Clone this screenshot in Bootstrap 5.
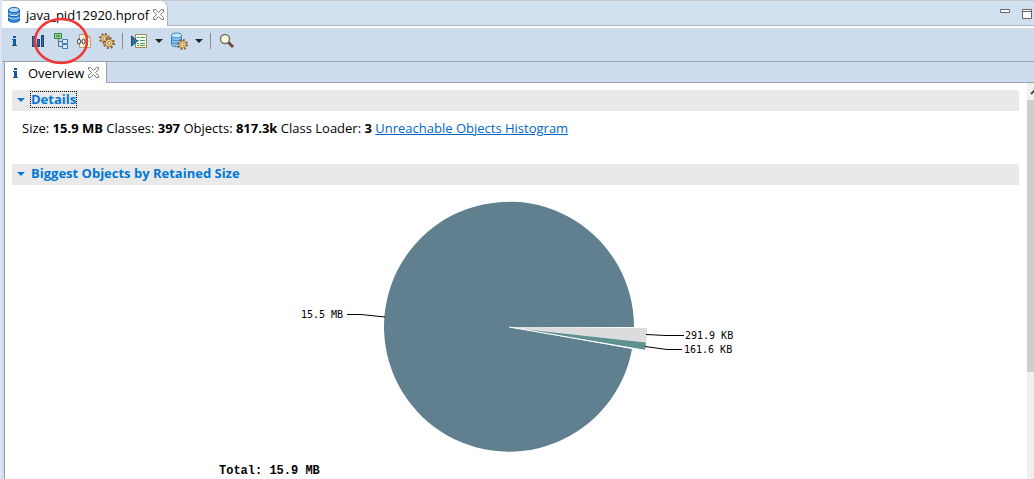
<!DOCTYPE html>
<html lang="en">
<head>
<meta charset="utf-8">
<meta name="viewport" content="width=device-width, initial-scale=1">
<title>java_pid12920.hprof</title>
<link rel="stylesheet" href="https://cdn.jsdelivr.net/npm/bootstrap@5.3.0/dist/css/bootstrap.min.css">
<style>
  body { font: 13px/20px "Open Sans", sans-serif; color: #000; background: #dfe4f3; }
  .editor { margin-left: 2px; border-top: 1px solid #c8c8c8; background: #cddcec; }
  .file-tabs { height: 25px; background: #d0e0ee; border-bottom: 1px solid #a9b4c8; }
  .file-tab { height: 27px; width: 166px; padding-left: 4px; background: #fff; border-right: 1px solid #a9b4c8; border-radius: 0 7px 0 0; }
  .plain { border: 0; padding: 0; background: none; color: inherit; display: flex; align-items: center; }
  .plain svg, .plot { display: block; }
  .toolbar { height: 36px; border-top: 2px solid #fff; border-bottom: 1px solid #9a9fa8; padding: 0 0 8px 5px; gap: 7px; }
  .toolbar .rule { width: 1px; height: 16px; background: #858b94; }
  .toolbar .plain, .file-tab .plain, .view-tab .plain { color: #222; }
  .ring { position: absolute; left: -20px; top: -16px; pointer-events: none; z-index: 2; }
  .view-tabs { height: 21px; border-bottom: 1px solid #9a9fa8; margin-left: 2px; }
  .view-tab { height: 21px; width: 103px; padding-left: 3px; background: #fff; border: 1px solid #9a9fa8; border-width: 0 1px; }
  .page-area { margin-left: 2px; background: #fff; border-left: 1px solid #9a9fa8; }
  .page-body { padding: 7px 8px 0 7px; }
  .section-head { height: 21px; background: #e9e9e9; padding: 0 0 2px 5px; gap: 6px; border-radius: 3px 3px 0 0; color: #0078d7; }
  .section-head h2 { font-size: 13px; line-height: 15px; font-weight: 700; margin: 0; }
  .section-head .focused { outline: 1px dotted #000; }
  .facts { margin: 7px 10px 26px; }
  .facts a { color: #0066cc; }
  .track { width: 7px; background: #f0f0f0; overflow: hidden; }
  .track svg { display: block; }
  .thumb { height: 272px; background: #cdcdcd; }
  .plot { margin: 10px auto 0; }
  .plot text { font: 10px "DejaVu Sans Mono", monospace; }
  .plot .total { font: bold 12px "Liberation Mono", monospace; }
</style>
</head>
<body class="min-vh-100 d-flex flex-column overflow-hidden">
<svg width="0" height="0" class="position-absolute" aria-hidden="true">
  <symbol id="info" viewBox="0 0 16 16"><path d="M6 3h3v2H6zM5 6h4v6h1v1H5v-1h1V7H5z" fill="#155a9c"/></symbol>
  <symbol id="cross" viewBox="0 0 11 11"><path d="M.5.5h2l3 3 3-3h2v2l-3 3 3 3v2h-2l-3-3-3 3h-2v-2l3-3-3-3z" fill="#fff" stroke="#777"/></symbol>
  <symbol id="caret" viewBox="0 0 8 4"><path d="M0 0h8L4 4z" fill="currentColor"/></symbol>
  <symbol id="cog" viewBox="-8 -8 16 16"><circle r="6.500" fill="none" stroke="#8b5a2b" stroke-width="3" stroke-dasharray="2.550 2.550"/><circle r="5" fill="#f2d08b" stroke="#96622c"/><circle r="2" fill="#fff" stroke="#96622c"/></symbol>
</svg>
<main class="editor flex-grow-1 d-flex flex-column">
  <div class="file-tabs d-flex justify-content-between">
    <div class="file-tab d-flex align-items-center flex-shrink-0">
      <svg width="16" height="18" viewBox="0 0 16 18" class="me-1"><g fill="#4c9be0" stroke="#1660b4"><path d="M2.500 4v10c0 3 11 3 11 0V4"/><ellipse cx="8" cy="4" rx="5.500" ry="2.500" fill="#b9def7"/><path d="M2.500 7.500c0 3 11 3 11 0M2.500 11c0 3 11 3 11 0" fill="none" stroke="#e4f4ff"/><path d="M2.500 8.500c0 3 11 3 11 0M2.500 12c0 3 11 3 11 0" fill="none"/></g></svg>
      <span>java_pid12920.hprof</span>
      <button class="plain ms-1" aria-label="Close file"><svg width="11" height="11"><use href="#cross"/></svg></button>
    </div>
    <div class="d-flex gap-2 pt-2">
      <button class="plain align-items-start me-1" aria-label="Minimize"><svg width="10" height="4"><path d="M.5.5h9v3h-9z" fill="#fff" stroke="#666"/></svg></button>
      <button class="plain align-items-start" aria-label="Maximize"><svg width="12" height="10"><path d="M.5.5h9v9h-9zM.5 2.500h9" fill="#fff" stroke="#666"/></svg></button>
    </div>
  </div>
  <div class="toolbar d-flex align-items-center">
    <button class="plain" aria-label="Overview"><svg width="16" height="16"><use href="#info"/></svg></button>
    <button class="plain" aria-label="Histogram"><svg width="16" height="16"><path d="M2 3h3v11H2zM7 6h3v8H7zM11 2h3v12h-3z" fill="#1f4678"/><path d="M3 4h1v9H3zM8 7h1v6H8zM12 3h1v10h-1z" fill="#376795"/></svg></button>
    <button class="plain position-relative" aria-label="Dominator tree"><svg width="16" height="16"><path d="M1.500.5h7v5h-7z" fill="#9bd694" stroke="#2f8048"/><path d="M3 2h4v2H3z" fill="#4da958"/><path d="M5.500 6v7.500H9M5.500 8.500H9" fill="none" stroke="#567486"/><path d="M9.500 6.500h5v4h-5zM9.500 11.500h5v4h-5z" fill="#d9ecf8" stroke="#3b7fae"/></svg>
      <svg class="ring" width="56" height="50" viewBox="0 0 56 50"><ellipse cx="28" cy="24" rx="26" ry="22" fill="none" stroke="#f23636" stroke-width="2.500"/></svg></button>
    <button class="plain" aria-label="Object query"><svg width="16" height="16"><path d="M3.500 1.500h8l3 3v10h-11z" fill="#f8f1dc" stroke="#b99f62"/><path d="M11.500 1.500v3h3" fill="#e3bf72" stroke="#b99f62"/><ellipse cx="3" cy="8.500" rx="1.500" ry="2.500" fill="#fff" stroke="#333"/><ellipse cx="7.500" cy="8.500" rx="1.500" ry="2.500" fill="#fff" stroke="#333"/><path d="M11.500 6v6M10 7.500h1" stroke="#333"/></svg></button>
    <button class="plain" aria-label="Thread overview"><svg width="16" height="16"><use href="#cog" width="11" height="11"/><use href="#cog" x="4" y="4" width="12" height="12"/></svg></button>
    <span class="rule"></span>
    <button class="plain" aria-label="Run report"><svg width="18" height="16"><path d="M5.500 1.500h11v13h-11z" fill="#f4fbec" stroke="#a08b4c"/><path d="M7 4.500h2m1 0h5M7 7.500h2m1 0h5M7 10.500h2m1 0h5M7 12.500h2m1 0h5" stroke="#4b9a67"/><path d="M1.500 3v10l6-5z" fill="#2f709b" stroke="#174d77"/></svg></button>
    <button class="plain" aria-label="Report menu"><svg width="8" height="4"><use href="#caret"/></svg></button>
    <button class="plain" aria-label="Heap actions"><svg width="18" height="18"><g fill="#8fc8f2" stroke="#3980c3"><path d="M1.500 3.500v9c0 3 10 3 10 0v-9"/><ellipse cx="6.500" cy="3.500" rx="5" ry="2.500" fill="#c7e5fa"/><path d="M1.500 6.500c0 3 10 3 10 0M1.500 9.500c0 3 10 3 10 0" fill="none"/></g><use href="#cog" x="7" y="7" width="11" height="11"/></svg></button>
    <button class="plain" aria-label="Heap menu"><svg width="8" height="4"><use href="#caret"/></svg></button>
    <span class="rule"></span>
    <button class="plain" aria-label="Find object"><svg width="18" height="16"><path d="m10 9 5 5" stroke="#714b3e" stroke-width="3"/><circle cx="7" cy="6" r="4.500" fill="#fffce5" stroke="#777265" stroke-width="1.500"/></svg></button>
  </div>
  <div class="view-tabs">
    <div class="view-tab d-flex align-items-center">
      <svg width="16" height="16" class="me-1"><use href="#info"/></svg><span>Overview</span>
      <button class="plain ms-1" aria-label="Close overview"><svg width="11" height="11"><use href="#cross"/></svg></button>
    </div>
  </div>
  <div class="page-area flex-grow-1 d-flex">
    <div class="page-body flex-grow-1">
      <div class="section-head d-flex align-items-center"><svg width="8" height="4"><use href="#caret"/></svg><h2 class="focused">Details</h2></div>
      <p class="facts">Size: <b>15.9 MB</b> Classes: <b>397</b> Objects: <b>817.3k</b> Class Loader: <b>3</b> <a href="#">Unreachable Objects Histogram</a></p>
      <div class="section-head d-flex align-items-center"><svg width="8" height="4"><use href="#caret"/></svg><h2>Biggest Objects by Retained Size</h2></div>
      <svg class="plot" width="593" height="284" viewBox="219 195 593 284" role="img" aria-label="Retained size by object">
        <path d="M509 327H634A125 125 0 1 0 632 349Z" fill="#607f8f"/>
        <path d="M509 327 647 328Q647.500 335 646 342.500Z" fill="#dcdcdc"/>
        <path d="M514 328 646 342.500 645 350Z" fill="#5f9191"/>
        <path d="M509 327 646 350.500" stroke="#fff"/>
        <path d="M347 314.500h14L385 317M646 334.500 666 335.500H684M645 346.500 667 349.500H682" fill="none" stroke="#000"/>
        <text x="301" y="318">15.5 MB</text>
        <text x="685" y="339">291.9 KB</text>
        <text x="684" y="353">161.6 KB</text>
        <text class="total" x="219" y="474">Total: 15.9 MB</text>
      </svg>
    </div>
    <div class="track flex-shrink-0"><svg width="14" height="17"><path d="m4 11 4-4 4 4" fill="none" stroke="#505050" stroke-width="2"/></svg><div class="thumb"></div></div>
  </div>
</main>
<script src="https://cdn.jsdelivr.net/npm/bootstrap@5.3.0/dist/js/bootstrap.bundle.min.js"></script>
</body>
</html>
